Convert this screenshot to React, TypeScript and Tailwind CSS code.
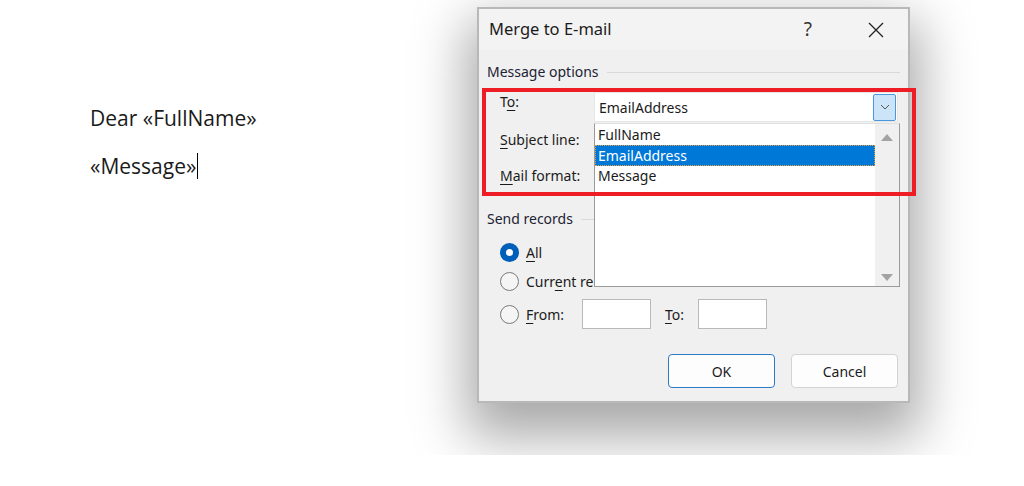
import React from "react";

const ui = "font-['Noto_Sans',sans-serif]";

function Radio({ checked }: { checked?: boolean }) {
  if (checked) {
    return (
      <span className="flex h-[19px] w-[19px] items-center justify-center rounded-full bg-[#005fb8]">
        <span className="h-[7px] w-[7px] rounded-full bg-white" />
      </span>
    );
  }
  return <span className="h-[19px] w-[19px] rounded-full border border-[#7a7a7a] bg-[#f5f5f5]" />;
}

function U({ children }: { children: React.ReactNode }) {
  return <span className="underline underline-offset-[3px] decoration-1">{children}</span>;
}

export default function App() {
  return (
    <div className="flex h-[486px] w-[1024px] overflow-hidden bg-white">
      {/* document */}
      <div className="w-[380px] shrink-0 pl-[90px] pt-[103px] font-['Open_Sans',sans-serif] text-[21px] leading-[30px] text-[#1a1a1a]">
        <p>Dear «FullName»</p>
        <p className="mt-[18px] flex items-center">
          «Message»<span className="ml-[1px] h-[26px] w-px bg-black" />
        </p>
      </div>

      {/* dialog area, shadow clipped like the screen grab */}
      <div className="h-[455px] flex-1 overflow-hidden pl-[97px] pt-[7px]">
        <div
          className={`${ui} relative flex h-[396px] w-[433px] flex-col border-2 border-[#b8b8b8] bg-[#f0f0f0] text-[14px] text-[#1b1b1b] shadow-[0_24px_50px_10px_rgba(0,0,0,0.34)]`}
        >
          {/* title bar */}
          <div className="flex h-[41px] shrink-0 items-center bg-[#f3f3f3] pl-[10px]">
            <span className="text-[16.5px] text-[#1b1b1b]">Merge to E-mail</span>
            <span className="ml-auto mr-[56px] text-[19px] text-[#333]">?</span>
            <svg width="16" height="16" viewBox="0 0 16 16" className="mr-[24px]">
              <path d="M1 1 L15 15 M15 1 L1 15" stroke="#222" strokeWidth="1.3" />
            </svg>
          </div>

          <div className="flex flex-1 flex-col px-[8px]">
            {/* message options */}
            <div className="mt-[12px] flex items-center gap-[8px]">
              <span className="leading-[20px] text-[#1c2333]">Message options</span>
              <span className="h-px flex-1 bg-[#d9d9d9]" />
            </div>

            <div className="mt-[10px] flex flex-col pl-[13px]">
              <div className="flex h-[30px] items-start">
                <span className="w-[94px] leading-[20px]">
                  T<U>o</U>:
                </span>
                <div className="flex h-[30px] w-[304px] items-center border border-[#e6e6e6] bg-white pl-[4px]">
                  <span>EmailAddress</span>
                  <span className="ml-auto mr-[1px] flex h-[27px] w-[23px] items-center justify-center rounded-[2px] border border-[#4a97de] bg-[#cce4f7]">
                    <svg width="10" height="6" viewBox="0 0 10 6">
                      <path d="M1 1 L5 5 L9 1" fill="none" stroke="#555" strokeWidth="1" />
                    </svg>
                  </span>
                </div>
              </div>
              <div className="mt-[2px] flex h-[30px] items-center">
                <span className="w-[94px]">
                  <U>S</U>ubject line:
                </span>
              </div>
              <div className="mt-[6px] flex h-[30px] items-center">
                <span className="w-[94px]">
                  <U>M</U>ail format:
                </span>
              </div>
            </div>

            {/* send records */}
            <div className="mt-[19px] flex items-center gap-[8px]">
              <span className="leading-[20px] text-[#1c2333]">Send records</span>
              <span className="h-px flex-1 bg-[#d9d9d9]" />
            </div>

            <div className="mt-[13px] flex flex-col pl-[13px]">
              <div className="flex h-[20px] items-center gap-[7px]">
                <Radio checked />
                <span>
                  <U>A</U>ll
                </span>
              </div>
              <div className="mt-[9px] flex h-[20px] items-center gap-[7px]">
                <Radio />
                <span>
                  Curr<U>e</U>nt record
                </span>
              </div>
              <div className="mt-[8px] flex h-[30px] items-center">
                <Radio />
                <span className="ml-[7px] w-[56px]">
                  <U>F</U>rom:
                </span>
                <span className="h-[30px] w-[69px] border border-[#b9b9b9] bg-white" />
                <span className="ml-[14px] w-[33px]">
                  <U>T</U>o:
                </span>
                <span className="h-[30px] w-[69px] border border-[#b9b9b9] bg-white" />
              </div>
            </div>

            <div className="mt-[25px] flex justify-end gap-[16px] pr-[2px]">
              <button className="h-[34px] w-[107px] rounded-[4px] border border-[#2b79c9] bg-[#fdfdfd] text-[14px]">
                OK
              </button>
              <button className="h-[34px] w-[107px] rounded-[4px] border border-[#d3d3d3] bg-[#fdfdfd] text-[14px]">
                Cancel
              </button>
            </div>
          </div>

          {/* open dropdown list */}
          <div className="absolute left-[115px] top-[114px] flex h-[164px] w-[306px] border border-[#9a9a9a] border-t-[#e0e0e0] bg-white">
            <div className="flex flex-1 flex-col pt-[1px]">
              <div className="h-[20px] pl-[3px] leading-[20px]">FullName</div>
              <div className="h-[21px] border border-dotted border-[#e8a040] bg-[#0078d7] pl-[2px] leading-[19px] text-white">
                EmailAddress
              </div>
              <div className="h-[20px] pl-[3px] leading-[20px]">Message</div>
            </div>
            <div className="flex w-[24px] flex-col items-center justify-between bg-[#f0f0f0] pb-[5px] pt-[10px]">
              <svg width="12" height="7" viewBox="0 0 12 7">
                <path d="M6 0 L12 7 L0 7 Z" fill="#a3a3a3" />
              </svg>
              <svg width="12" height="7" viewBox="0 0 12 7">
                <path d="M0 0 L12 0 L6 7 Z" fill="#a3a3a3" />
              </svg>
            </div>
          </div>

          {/* red annotation box */}
          <div className="pointer-events-none absolute left-[3px] top-[79px] h-[108px] w-[434px] border-4 border-[#ee1c25]" />
        </div>
      </div>
    </div>
  );
}
